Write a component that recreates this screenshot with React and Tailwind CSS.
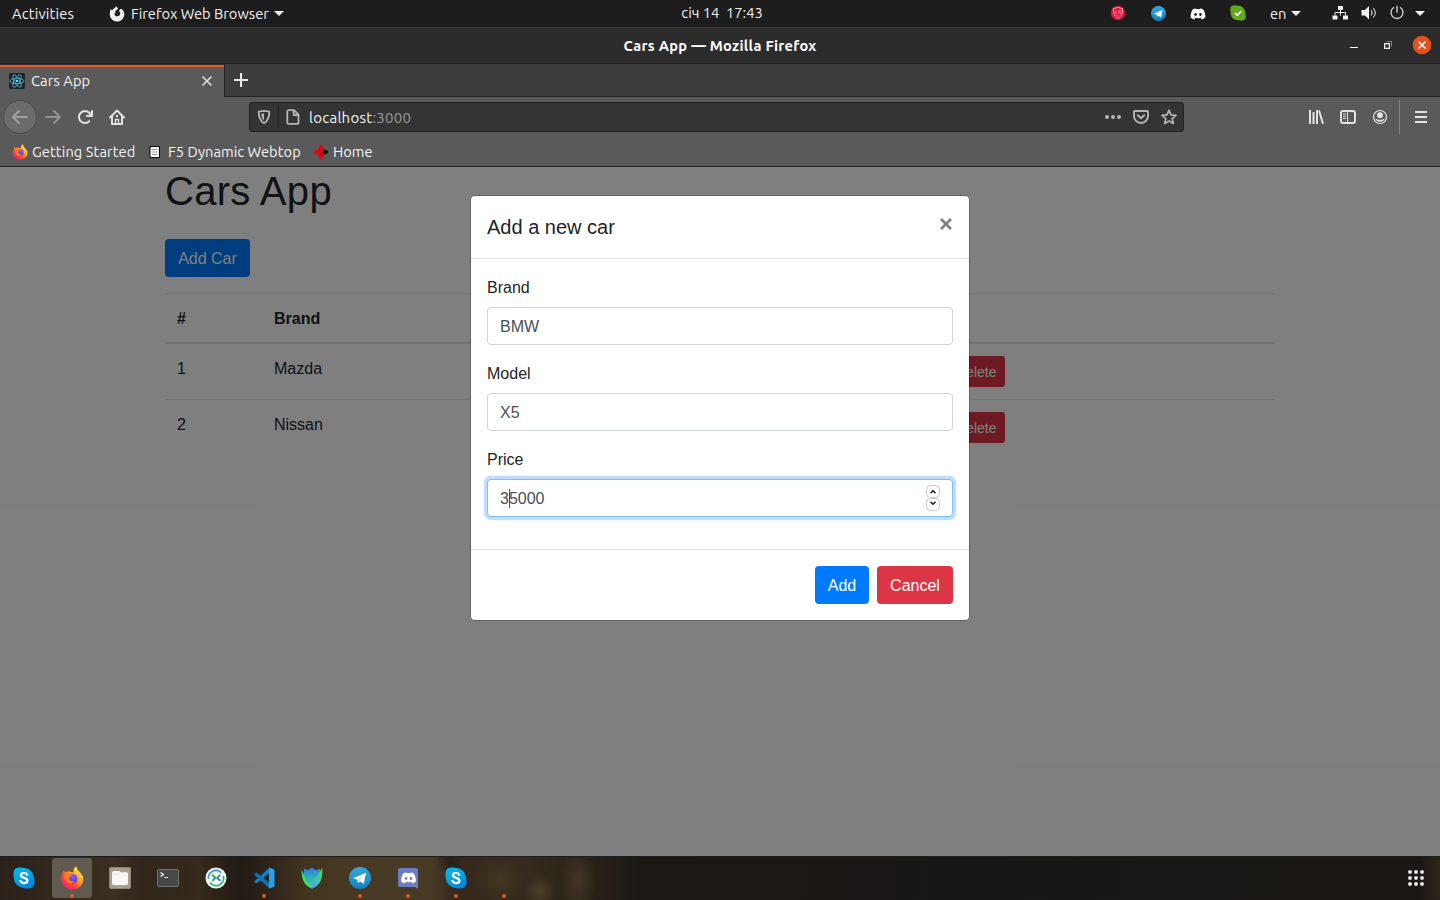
import React from "react";
import { FaDiscord } from "react-icons/fa";

const ui = "font-['Ubuntu','Noto_Sans',sans-serif] whitespace-nowrap";

function Icon({ size = 16, box = 16, className = "", children }) {
  return (
    <svg width={size} height={size} viewBox={`0 0 ${box} ${box}`} fill="none" className={`block shrink-0 ${className}`}>
      {children}
    </svg>
  );
}

const Caret = () => (
  <svg width="10" height="5" viewBox="0 0 10 5" className="block shrink-0"><path d="M0 0h10L5 5z" fill="#f2f2f2" /></svg>
);

const Plane = ({ size, id }) => (
  <Icon size={size} box={22}>
    <defs>
      <linearGradient id={id} x1="0" y1="0" x2="0" y2="1"><stop stopColor="#36a9de" /><stop offset="1" stopColor="#147fbb" /></linearGradient>
    </defs>
    <circle cx="11" cy="11" r="11" fill={`url(#${id})`} />
    <path d="M4 11.2 17 5.8 14.8 17 11 14.2 9 16.2 8.5 12.8z" fill="#fff" />
    <path d="M8.5 12.8 14.5 8.2 10 13.4 9 16.2z" fill="#b9d9ea" />
  </Icon>
);

const Fox = ({ size, id }) => (
  <Icon size={size} box={24}>
    <defs>
      <linearGradient id={`${id}a`} x1=".85" y1=".1" x2=".15" y2=".95">
        <stop stopColor="#fff44f" /><stop offset=".35" stopColor="#ffa51e" /><stop offset=".65" stopColor="#ff4a30" /><stop offset="1" stopColor="#ee168c" />
      </linearGradient>
      <radialGradient id={`${id}b`} cx=".6" cy=".3" r=".8"><stop stopColor="#9059ff" /><stop offset="1" stopColor="#4035b5" /></radialGradient>
    </defs>
    <path d="M2.500 8C2.500 6.500 3.500 4.800 4.300 4.200c0 1 .3 1.500.9 2C7 5.500 8.500 5.300 10 5.800c1-.2 2.500.3 3.500.8C13 3.500 14.500 1.200 16.500.3c0 2.200 1 3.700 2.500 5.200 2 2 3 3.200 3.200 4.700l.4-1.200c1 3 1 6.500-.6 9.300-2 3.500-5.500 5.200-9.600 5.200C6.400 23.500 1.200 19 1.200 13c0-2 .5-3.600 1.300-5z" fill={`url(#${id}a)`} />
    <circle cx="12.500" cy="12.800" r="4.900" fill={`url(#${id}b)`} />
    <path d="M4.500 8.200c2-.8 4.200-.6 5.500.3.800.5 1.600.6 2.500.6-.3 1.400-2.800 1.400-3.300 2.600 0 3 2.800 4.300 5.800 3.500-1.500 2-3.500 2.600-5.300 2.300C6 17 3.500 12 4.500 8.200z" fill="#ff7a26" />
  </Icon>
);

const Skype = ({ id }) => (
  <Icon size={22} box={22}>
    <defs>
      <linearGradient id={id} gradientUnits="userSpaceOnUse" x1="4" y1="0" x2="14" y2="22"><stop stopColor="#0bb2ec" /><stop offset=".5" stopColor="#06a4e8" /><stop offset="1" stopColor="#0580d6" /></linearGradient>
    </defs>
    <rect x=".5" y=".5" width="14" height="14" rx="5.500" fill={`url(#${id})`} />
    <rect x="7.500" y="7.500" width="14" height="14" rx="5.500" fill={`url(#${id})`} />
    <circle cx="11" cy="11" r="10" fill={`url(#${id})`} />
    <path d="M14.200 7.700C13.500 6.500 12.500 6 11 6c-1.900 0-3.100.9-3.100 2.300 0 3.300 6.500 1.800 6.500 5.200 0 1.600-1.400 2.600-3.300 2.600-1.700 0-2.900-.6-3.600-2" stroke="#fff" strokeWidth="2.200" strokeLinecap="round" />
  </Icon>
);

function TopBar() {
  return (
    <div className={`flex h-7 items-center border-b border-[#393939] bg-[#1d1d1d] text-[14.667px] leading-5 text-[#f2f2f2] ${ui}`}>
      <div className="flex flex-1 items-center pr-[7px] pl-3">
        <span className="w-[97px] tracking-[0.2px]">Activities</span>
        <Icon>
          <path d="M7.800.3c.1 1.200.7 1.700 1.300 2.200L7.600 3.900c-.6.8-1.200 1-2 1.200.9.500 1.200 1 .8 1.700L5.300 8c.4 1.500 1.500 2.300 3 2.300 2.600 0 3.700-2.600 2.400-4.500L9.800 4.700C10.800 4 11 3.300 12 2.800c2.200 1 3.300 3.100 3.300 5.400 0 4-3.200 7.300-7.200 7.300C4 15.500.8 12.300.8 8.300.8 6 1.200 4.300 2 3l.8 1.200C4 3.700 4.600 3.200 5 2.600z" fill="#f2f2f2" />
        </Icon>
        <span className="ml-[6px] w-[143px]">Firefox Web Browser</span>
        <Caret />
      </div>
      <div className="pb-0.5 whitespace-pre">січ 14  17:43</div>
      <div className="flex flex-1 items-center justify-end pr-[15px]">
        <Icon className="mb-px">
          <circle cx="8" cy="8" r="7.200" fill="#e4113b" />
          <path d="M8 2.300c1.500.8 3 1.100 4.600 1.100 0 5-.9 8-4.600 10.100C4.300 11.400 3.400 8.400 3.400 3.400 5 3.400 6.500 3.100 8 2.300z" fill="#e4113b" stroke="#f7b6c3" strokeWidth=".9" />
          <path d="M4.500 6.300h2.300M4.800 8.300h2.300M8 6h3.300M8.300 8h2.800M6.500 10.300l2 .7" stroke="#f39cb0" strokeWidth="1.100" />
        </Icon>
        <span className="mb-px ml-6 flex w-4 justify-center"><Plane size={15} id="tg-tray" /></span>
        <FaDiscord className="ml-6 h-4 w-4 text-white" />
        <Icon className="mb-px ml-6">
          <path d="M1 1.200C3 .2 5 .3 7 .5c5 0 8.500 3 8.300 8.300.8 2 .7 4-.4 5.800-2 1.300-4 1.300-6 .6C3.500 15.700.3 12 .7 7.200 0 5 .2 3 1 1.200z" fill="#62a81b" />
          <path d="M5 8.200 7.200 10.300 11.300 6" stroke="#fff" strokeWidth="1.800" />
        </Icon>
        <span className="ml-6 mr-[5px] w-4">en</span>
        <Caret />
        <Icon className="mb-px ml-[31px]">
          <path d="M6 1h5v4H6zM.500 10.500h5v4h-5zM11 10.500h5v4h-5z" fill="#f2f2f2" />
          <path d="M8.500 4.500v3M3 10.500v-3h10.500v3" stroke="#f2f2f2" />
          <path d="M8.500 7.500v3" stroke="#f2f2f2" />
        </Icon>
        <Icon className="mb-px ml-[13px]">
          <path d="M.500 5H4l4-4v13.500L4 10.500H.500z" fill="#f2f2f2" />
          <path d="M10 5.200c1.200 1.500 1.200 3.600 0 5.200M12.200 3c2.600 2.900 2.600 6.700 0 9.500" stroke="#d8d8d8" strokeWidth="1.100" />
        </Icon>
        <Icon className="mb-px ml-3">
          <path d="M5 2.300a6 6 0 1 0 6 0M8 .8v7" stroke="#d8d8d8" strokeWidth="1.300" />
        </Icon>
        <span className="ml-[10px]"><Caret /></span>
      </div>
    </div>
  );
}

function TitleBar() {
  return (
    <div className={`flex h-9 items-center border-b border-[#222] bg-[#2c2c2c] text-white ${ui}`}>
      <div className="flex-1 pl-2" />
      <div className="text-[14.667px] leading-5 font-bold tracking-[0.27px]">Cars App — Mozilla Firefox</div>
      <div className="flex flex-1 items-center justify-end pr-[8px] pb-px">
        <Icon className="mr-[18px] text-white"><path d="M4 10.500h8" stroke="#fff" /></Icon>
        <Icon className="mr-[16px]">
          <path d="M6.500 4.500h5v5" stroke="#858585" /><path d="M4.700 6.700h4.600v4.600H4.700z" stroke="#fff" strokeWidth="1.200" />
        </Icon>
        <Icon size={20} box={20}>
          <circle cx="10" cy="10" r="9.300" fill="#e2521d" /><path d="m6.500 6.500 7 7m0-7-7 7" stroke="#fff" strokeWidth="1.500" />
        </Icon>
      </div>
    </div>
  );
}

function TabStrip() {
  return (
    <div className={`flex h-[33px] bg-[#3d3d3d] ${ui}`}>
      <div className="flex w-[224px] items-center bg-[#5a5a5a] pt-px pl-[9px] pr-[10px] shadow-[inset_0_1px_0_#303030,inset_0_3px_0_#e95420]">
        <Icon>
          <rect width="16" height="16" rx="2" fill="#20232a" />
          <g stroke="#53c1de" strokeWidth=".8">
            <ellipse cx="8" cy="8" rx="7" ry="2.700" /><ellipse cx="8" cy="8" rx="7" ry="2.700" transform="rotate(60 8 8)" /><ellipse cx="8" cy="8" rx="7" ry="2.700" transform="rotate(120 8 8)" />
          </g>
          <circle cx="8" cy="8" r="1.300" fill="#61dafb" />
        </Icon>
        <span className="ml-[6px] flex-1 text-[14.667px] leading-5 tracking-[0.1px] text-[#f4f4f4]">Cars App</span>
        <Icon size={14} box={14}><path d="m2.500 2.500 9 9m0-9-9 9" stroke="#e0e0e0" strokeWidth="1.600" /></Icon>
      </div>
      <div className="flex flex-1 items-center border-b border-l border-[#222] pl-2">
        <Icon><path d="M8 1v14M1 8h14" stroke="#e8e8e8" strokeWidth="2" /></Icon>
      </div>
    </div>
  );
}

function NavBar() {
  return (
    <div className={`flex h-10 items-center bg-[#5a5a5a] text-[#e3e3e3] ${ui}`}>
      <div className="ml-[3px] flex h-[34px] w-[34px] items-center justify-center rounded-full border border-[#4c4c4c] bg-[#6b6b6b]">
        <Icon><path d="M15 7H3.414l4.293-4.293a1 1 0 0 0-1.414-1.414l-6 6a1 1 0 0 0 0 1.414l6 6a1 1 0 0 0 1.414-1.414L3.414 9H15a1 1 0 0 0 0-2z" fill="#a0a0a0" /></Icon>
      </div>
      <Icon className="ml-2 -scale-x-100"><path d="M15 7H3.414l4.293-4.293a1 1 0 0 0-1.414-1.414l-6 6a1 1 0 0 0 0 1.414l6 6a1 1 0 0 0 1.414-1.414L3.414 9H15a1 1 0 0 0 0-2z" fill="#939393" /></Icon>
      <Icon className="ml-4"><path d="M15 1a1 1 0 0 0-1 1v2.418A6.995 6.995 0 1 0 8 15a6.954 6.954 0 0 0 4.950-2.050 1 1 0 0 0-1.414-1.414A5.019 5.019 0 1 1 12.549 6H10a1 1 0 0 0 0 2h5a1 1 0 0 0 1-1V2a1 1 0 0 0-1-1z" fill="currentColor" /></Icon>
      <Icon className="ml-4">
        <path d="M1 8.500 8 1.500l7 7M3 7v8h10V7" stroke="currentColor" strokeWidth="2" strokeLinecap="round" strokeLinejoin="round" />
        <path d="M6.500 15v-4.500h3V15" stroke="currentColor" strokeWidth="1.300" /><path d="M8 6v2" stroke="currentColor" strokeWidth="2" />
      </Icon>
      <div className="ml-[124px] flex h-[30px] w-[935px] items-center rounded-[3px] border border-[#222] bg-[#343434] pl-[6px] pr-[6px] text-[#b5b5b5]">
        <Icon>
          <path d="M8 1.800c1.800 0 3.700.3 5.300 1C13.300 9 12 12 8 14.300 4 12 2.700 9 2.700 2.800 4.300 2.100 6.200 1.800 8 1.800z" stroke="currentColor" strokeWidth="1.800" strokeLinejoin="round" />
          <path d="M8 4.500v7C6 10 5.400 8 5.400 4.800 6.200 4.600 7 4.500 8 4.500z" fill="currentColor" />
        </Icon>
        <div className="ml-[6px] h-[22px] w-px bg-[#222]" />
        <Icon className="ml-[6px]"><path d="M3.500 1.200H9l4.500 4.500v8a1.200 1.200 0 0 1-1.200 1.200H3.500a1.200 1.200 0 0 1-1.200-1.200V2.400A1.200 1.200 0 0 1 3.500 1.200zM8.700 1.500V6h4.500" stroke="currentColor" strokeWidth="1.800" strokeLinejoin="round" /></Icon>
        <span className="ml-2 flex-1 pt-px text-[15px] leading-5 tracking-[0.26px] text-[#f5f5f5]">localhost<span className="text-[#9b9b9b]">:3000</span></span>
        <Icon><path d="M2 6a2 2 0 1 0 0 4 2 2 0 0 0 0-4zm6 0a2 2 0 1 0 0 4 2 2 0 0 0 0-4zm6 0a2 2 0 1 0 0 4 2 2 0 0 0 0-4z" fill="currentColor" /></Icon>
        <Icon className="ml-3"><path d="M1.800 2h12.400c.5 0 .8.300.8.800V7a7 7 0 0 1-14 0V2.800c0-.5.300-.8.800-.8z" stroke="currentColor" strokeWidth="1.900" /><path d="m4.800 6.300 3.200 3 3.200-3" stroke="currentColor" strokeWidth="2" strokeLinecap="round" strokeLinejoin="round" /></Icon>
        <Icon className="ml-3"><path d="m8 1.200 2 4.600 5 .5-3.800 3.300 1.100 4.900L8 12l-4.300 2.500 1.100-4.900L1 6.300l5-.5z" stroke="currentColor" strokeWidth="1.700" strokeLinejoin="round" /></Icon>
      </div>
      <Icon className="ml-[124px]"><path d="M2 1v14M5.500 3v12M9 1v14M11 1.500 15 14.700" stroke="currentColor" strokeWidth="2" /></Icon>
      <Icon className="ml-4">
        <rect x="1" y="2" width="14" height="12" rx="2" stroke="currentColor" strokeWidth="2" /><path d="M7.500 2v12" stroke="currentColor" /><path d="M3 5h3M3 7.300h3M3 9.500h3" stroke="currentColor" />
      </Icon>
      <Icon className="ml-4">
        <circle cx="8" cy="8" r="6.500" stroke="currentColor" strokeWidth="1.200" /><circle cx="8" cy="6.200" r="2.900" fill="currentColor" /><path d="M3.300 9.500c1 .9 2.800 1.200 4.700 1.200s3.700-.3 4.700-1.200a5 5 0 0 1-9.400 0z" fill="currentColor" />
      </Icon>
      <div className="ml-[11px] h-[34px] w-px bg-[#848484]" />
      <Icon className="ml-[13px]"><path d="M2 3h12M2 8h12M2 13h12" stroke="currentColor" strokeWidth="2" /></Icon>
    </div>
  );
}

function Bookmarks() {
  return (
    <div className={`flex h-[30px] items-center border-b border-[#222] bg-[#5a5a5a] pl-3 text-[14.667px] leading-5 text-[#f4f4f4] ${ui}`}>
      <Fox size={16} id="fx-bm" />
      <span className="ml-1 w-[115px] tracking-[0.1px]">Getting Started</span>
      <Icon><path d="M3 2.600h9.500v11H3z" fill="#fff" stroke="#000" /><path d="M5 5.500h5.500M5 8h5.500M5 10.500h5.500" stroke="#999" /></Icon>
      <span className="ml-[5px] w-[145px] tracking-[0.05px]">F5 Dynamic Webtop</span>
      <Icon>
        <path d="M8 5.500c4-.5 7 .8 7.500 2.500-1 1.800-4 3-7.500 2.500z" fill="#111" />
        <path d="M8 5.500C4 5 1 6.200.500 8c.500 1.800 3.500 3 7.500 2.500z" fill="#df0613" />
        <path d="M5.500 8C5.200 4 6.500 1 8 .500 9.500 1 10.800 4 10.500 8 10.800 12 9.500 15 8 15.500 6.500 15 5.200 12 5.500 8z" fill="#e30613" /><path d="M8 8h2.500c0 1.500-.8 2.500-2.500 3z" fill="#7d0a10" />
      </Icon>
      <span className="ml-1">Home</span>
    </div>
  );
}

function Row({ id, brand, first }) {
  return (
    <div className={`flex px-3 py-3 ${first ? "" : "border-t border-[#dee2e6]"}`}>
      <span className="-mb-px w-[97px] pt-px">{id}</span>
      <span className="-mb-px w-[673px] pt-px">{brand}</span>
      <button className="h-[31px] rounded-[3.200px] bg-[#dc3545] px-[9px] pt-0.5 text-[14px] leading-[21px] text-white">Delete</button>
    </div>
  );
}

function Field({ label, value, focused }) {
  return (
    <label className="mb-4 block">
      <span className="mb-[7px] block pt-px">{label}</span>
      <span className={`flex h-[38px] items-center rounded border bg-white px-3 text-[#495057] ${focused ? "border-[#80bdff] shadow-[0_0_0_3.200px_rgba(0,123,255,0.25)]" : "border-[#ced4da]"}`}>
        <span className="relative flex-1 pt-0.5">
          {value}
          {focused && <span className="absolute top-1 left-[9px] h-[19px] w-px bg-[#495057]" />}
        </span>
        {focused && (
          <svg width="14" height="26" viewBox="0 0 14 26" fill="none" className="block">
            <rect x=".5" y=".5" width="13" height="12" rx="4" stroke="#cdc7c2" /><rect x=".5" y="13.500" width="13" height="12" rx="4" stroke="#cdc7c2" />
            <path d="m4.500 8.300 2.500-2.500 2.500 2.500M4.500 16.700 7 19.200l2.500-2.500" stroke="#1a1a1a" strokeWidth="1.500" />
          </svg>
        )}
      </span>
    </label>
  );
}

function Modal() {
  return (
    <div className="w-[500px] rounded-[4.800px] border border-black/20 bg-white bg-clip-padding">
      <div className="flex h-[63px] items-start justify-between border-b border-[#dee2e6] p-4">
        <h5 className="text-[20px] leading-[30px]">Add a new car</h5>
        <svg width="14" height="14" viewBox="0 0 14 14" className="mt-[5px] block"><path d="m2 2 10 10M12 2 2 12" stroke="#7f7f7f" strokeWidth="2.700" /></svg>
      </div>
      <div className="p-4">
        <Field label="Brand" value="BMW" />
        <Field label="Model" value="X5" />
        <Field label="Price" value="35000" focused />
      </div>
      <div className="flex justify-end gap-2 border-t border-[#dee2e6] p-4">
        <button className="h-[38px] w-[54px] rounded bg-[#007bff] pt-0.5 text-white">Add</button>
        <button className="h-[38px] w-[76px] rounded bg-[#dc3545] pt-0.5 text-white">Cancel</button>
      </div>
    </div>
  );
}

function Page() {
  return (
    <div className="relative h-[689px] overflow-hidden bg-white font-['Liberation_Sans',Arial,sans-serif] text-base leading-6 text-[#212529]">
      <div className="mx-auto w-[1110px]">
        <h1 className="mb-6 text-[40px] leading-[48px] tracking-[0.3px]">Cars App</h1>
        <button className="block h-[38px] w-[85px] rounded bg-[#007bff] pt-0.5 text-white">Add Car</button>
        <div className="mt-4">
          <div className="flex border-t border-b-2 border-[#dee2e6] px-3 pt-[13px] pb-[11px] font-bold">
            <span className="w-[97px]">#</span>
            <span>Brand</span>
          </div>
          <Row id="1" brand="Mazda" first />
          <Row id="2" brand="Nissan" />
        </div>
      </div>
      <div className="absolute inset-0 flex items-start justify-center bg-black/50 pt-7">
        <Modal />
      </div>
    </div>
  );
}

function DockItem({ children, running, active }) {
  return (
    <div className={`relative flex h-10 w-10 items-center justify-center rounded-[3px] ${active ? "bg-[#605a50]" : ""}`}>
      {children}
      {running && <span className="absolute bottom-0 left-[18px] h-1 w-1 rounded-full bg-[#e95420]" />}
    </div>
  );
}

function Dock() {
  return (
    <div className="flex h-11 items-start justify-between border-t border-[#1b1d1c] bg-[radial-gradient(ellipse_18px_30px_at_578px_24px,#4c402cb0,#4c402c00),radial-gradient(ellipse_16px_16px_at_540px_34px,#54462fc0,#54462f00),radial-gradient(ellipse_26px_24px_at_500px_22px,#4a3d27b0,#4a3d2700),radial-gradient(ellipse_14px_14px_at_450px_4px,#1e1813a0,#1e181300),linear-gradient(90deg,#2a211a_0,#33281c_60px,#3b2f1f_115px,#30261a_145px,#352a1b_200px,#211a14_240px,#30261a_275px,#43361f_310px,#483b26_380px,#483b26_430px,#34291c_455px,#342a1d_530px,#2a2219_590px,#1c1814_640px,#1a1715_850px,#171616_950px,#191715_1200px,#1b1714_1420px,#30241a_1440px)] px-1 pt-px">
      <div className="flex gap-2">
        <DockItem><Skype id="sk1" /></DockItem>
        <DockItem active running><Fox size={24} id="fx-dock" /></DockItem>
        <DockItem>
          <Icon size={22} box={22}>
            <rect width="22" height="22" rx="2" fill="#8f8776" /><rect x="1" y="1" width="20" height="20" rx="1.500" fill="#a79f8d" />
            <path d="M3 6a2 2 0 0 1 2-2h5l1.500 1H17a2 2 0 0 1 2 2v9a2 2 0 0 1-2 2H5a2 2 0 0 1-2-2z" fill="#f8f7f4" /><path d="M3.500 7H10l1.500-1.500H18" stroke="#d9d5cc" strokeWidth=".7" />
          </Icon>
        </DockItem>
        <DockItem>
          <svg width="22" height="18" viewBox="0 0 22 18" fill="none"><rect x=".5" y=".5" width="21" height="17" rx="1.500" fill="#484848" stroke="#707070" /><path d="m3.500 3.500 3 2-3 2M7.500 8.500H11" stroke="#fff" strokeWidth="1.100" /></svg>
        </DockItem>
        <DockItem>
          <Icon size={22} box={22}>
            <circle cx="11" cy="11" r="10.500" fill="#f4f7f6" /><path d="M3.500 12a7.500 7.500 0 0 1 12.800-6.300" stroke="#4b9bd9" strokeWidth="1.800" /><path d="M18.300 9A7.500 7.500 0 0 1 5 15.500" stroke="#2eb67d" strokeWidth="1.800" />
            <path d="M7 7.800 10.300 10.500 7.500 13.800" stroke="#23a57a" strokeWidth="1.800" /><path d="m15.500 13.700-3.300-2.500 2.800-3.400" stroke="#2f86b8" strokeWidth="1.800" />
          </Icon>
        </DockItem>
        <DockItem running>
          <Icon size={22} box={22}>
            <path d="M16 1v5.500L3.300 16.500 1 14.700z" fill="#137fc8" /><path d="M1 7.400 3.300 5.500 16 15.500V21z" fill="#0875b8" /><path d="m16 .3 5.500 2.400v16.700L16 21.800z" fill="#29a0ec" />
          </Icon>
        </DockItem>
        <DockItem>
          <Icon size={22} box={22}>
            <defs>
              <linearGradient id="leaf" x1=".4" y1="0" x2=".5" y2="1"><stop stopColor="#2878ed" /><stop offset=".5" stopColor="#33b1b5" /><stop offset="1" stopColor="#3fe07c" /></linearGradient>
              <linearGradient id="leaf2" x1=".9" y1="0" x2=".4" y2="1"><stop stopColor="#43e45b" /><stop offset=".4" stopColor="#42cf94" /><stop offset="1" stopColor="#4aa8f4" /></linearGradient>
            </defs>
            <path d="M3 1.500 7 3.300 11 .5l4 2.800 4-1.800v12L11 21.500 3 14z" fill="url(#leaf)" />
            <path d="M.800 2.500C.300 11 2.500 18.500 11 21.500 6.500 17 3.500 10 .800 2.500z" fill="#48df69" />
            <path d="M21.200 1C21.800 12 19.500 18.500 11 21.500 10 13.500 17 9 21.200 1z" fill="url(#leaf2)" />
          </Icon>
        </DockItem>
        <DockItem running><Plane size={22} id="tg-dock" /></DockItem>
        <DockItem running>
          <Icon size={22} box={22}>
            <path d="M3 1h16a2 2 0 0 1 2 2v19l-3-2H3a2 2 0 0 1-2-2V3a2 2 0 0 1 2-2z" fill="#6c7cc4" />
            <FaDiscord x="3.500" y="3" width="15" height="15" color="#fff" />
          </Icon>
        </DockItem>
        <DockItem running><Skype id="sk2" /></DockItem>
        <DockItem running />
      </div>
      <svg width="16" height="16" viewBox="0 0 16 16" fill="#f2f2f2" className="mt-3 mr-3 block">
        {[0, 6, 12].map((y) => [0, 6, 12].map((x) => <rect key={`${x}-${y}`} x={x + 0.3} y={y + 0.3} width="3.400" height="3.400" rx="1" />))}
      </svg>
    </div>
  );
}

export default function App() {
  return (
    <div className="h-[900px] w-[1440px] overflow-hidden">
      <TopBar />
      <TitleBar />
      <TabStrip />
      <NavBar />
      <Bookmarks />
      <Page />
      <Dock />
    </div>
  );
}
